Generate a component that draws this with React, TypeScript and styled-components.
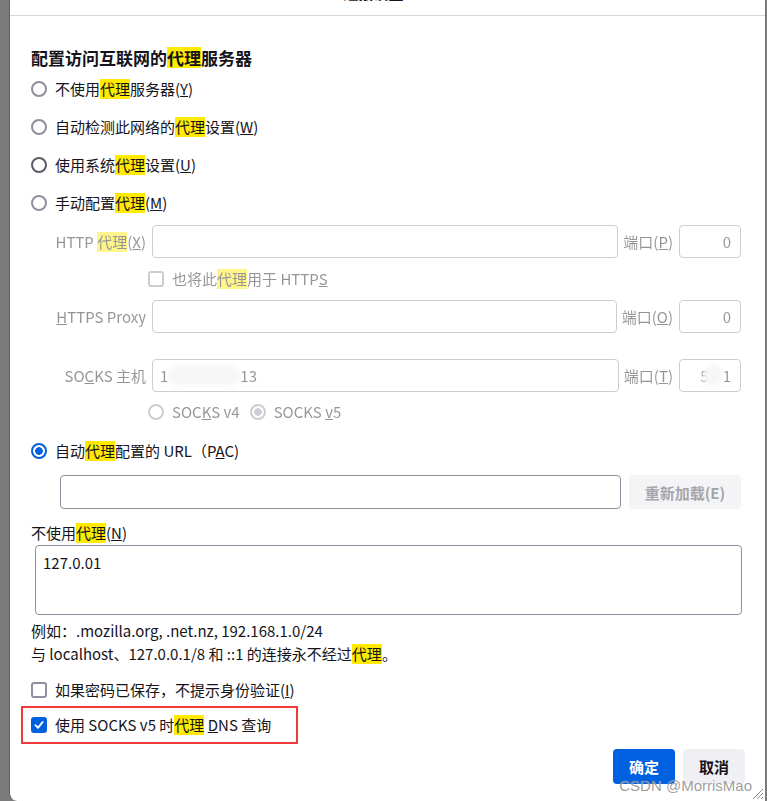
import React from "react";
import styled, { createGlobalStyle, css } from "styled-components";

const Global = createGlobalStyle`
  html, body { margin: 0; padding: 0; }
  body {
    background: #7b7b7b;
    font-family: "Noto Sans CJK SC", "Noto Sans", sans-serif;
    color: #15141a;
  }
`;

const Shell = styled.div`
  display: flex;
  width: 767px;
  height: 801px;
  padding-left: 9px;
  box-sizing: border-box;
  overflow: hidden;
`;

const Dialog = styled.div`
  position: relative;
  width: 757px;
  height: 801px;
  box-sizing: border-box;
  background: #fff;
  border-left: 1px solid #5f5f5f;
  border-right: 1px solid #7a7a7a;
  border-bottom-left-radius: 8px;
  display: flex;
  flex-direction: column;
`;

const Header = styled.div`
  height: 15px;
  border-bottom: 1px solid #d7d7db;
  display: flex;
  align-items: flex-start;
  justify-content: center;
  padding-right: 28px;
  overflow: hidden;
  position: relative;
`;

const Title = styled.div`
  font-size: 15px;
  font-weight: 700;
  line-height: 20px;
  margin-top: -17px;
`;

const Close = styled.div`
  position: absolute;
  right: 20px;
  top: -16px;
  font-size: 16px;
  line-height: 20px;
`;

const Content = styled.div`
  padding: 30px 24px 0 21px;
  display: flex;
  flex-direction: column;
  font-size: 15px;
`;

const Heading = styled.div`
  font-size: 17px;
  font-weight: 700;
  line-height: 24px;
`;

const Mark = styled.span<{ $big?: boolean }>`
  background: #ffea00;
  display: inline-block;
  line-height: ${(p) => (p.$big ? "21px" : "20px")};
`;

const Row = styled.div<{ $h?: number; $indent?: number; $gap?: number }>`
  display: flex;
  align-items: center;
  height: ${(p) => p.$h ?? 38}px;
  padding-left: ${(p) => p.$indent ?? 0}px;
  gap: ${(p) => p.$gap ?? 8}px;
  font-size: 15px;
  line-height: 20px;
  white-space: nowrap;
`;

const Radio = styled.span<{ $checked?: boolean; $strong?: boolean }>`
  flex: none;
  width: 16px;
  height: 16px;
  box-sizing: border-box;
  border-radius: 50%;
  border: 2px solid ${(p) => (p.$strong ? "#5b5b66" : "#8f8f9d")};
  background: #fff;
  ${(p) =>
    p.$checked &&
    css`
      border-color: #0061e0;
      background: radial-gradient(circle, #0061e0 0 3.5px, #fff 4px);
    `}
`;

const RadioGray = styled(Radio)`
  ${(p) =>
    p.$checked &&
    css`
      border-color: #8f8f9d;
      background: radial-gradient(circle, #8f8f9d 0 3.5px, #fff 4px);
    `}
`;

const Check = styled.span<{ $checked?: boolean }>`
  flex: none;
  width: 16px;
  height: 16px;
  box-sizing: border-box;
  border-radius: 3px;
  border: 2px solid ${(p) => (p.$checked ? "#0061e0" : "#8f8f9d")};
  background: ${(p) => (p.$checked ? "#0061e0" : "#fff")};
  display: flex;
  align-items: center;
  justify-content: center;
`;

const Disabled = styled.div`
  opacity: 0.45;
  display: flex;
  flex-direction: column;
  margin-left: 23px;
`;

const FieldRow = styled.div<{ $mt?: number }>`
  display: flex;
  align-items: center;
  gap: 6px;
  margin-top: ${(p) => p.$mt ?? 0}px;
  font-size: 15px;
  white-space: nowrap;
`;

const FieldLabel = styled.div`
  width: 92px;
  flex: none;
  text-align: right;
  line-height: 20px;
`;

const PortLabel = styled.div`
  flex: none;
  line-height: 20px;
  margin-left: -1px;
`;

const InputBox = styled.div<{ $h?: number }>`
  flex: 1;
  height: ${(p) => p.$h ?? 33}px;
  box-sizing: border-box;
  border: 1px solid #8f8f9d;
  border-radius: 4px;
  padding: 0 7px;
  display: flex;
  align-items: center;
  line-height: 20px;
  overflow: hidden;
`;

const PortBox = styled(InputBox)`
  flex: none;
  width: 62px;
  justify-content: flex-end;
  padding-right: 9px;
`;

const Blob = styled.span<{ $w: number; $ml?: number }>`
  display: inline-block;
  width: ${(p) => p.$w}px;
  height: 21px;
  margin-left: ${(p) => p.$ml ?? 0}px;
  border-radius: 11px;
  background: #ececec;
  filter: blur(2px);
`;

const PacRow = styled.div`
  display: flex;
  gap: 8px;
  margin-top: 5px;
  padding-left: 29px;
`;

const Button = styled.div<{ $variant: "primary" | "secondary" | "disabled"; $w: number; $h?: number }>`
  flex: none;
  width: ${(p) => p.$w}px;
  height: ${(p) => p.$h ?? 35}px;
  border-radius: 4px;
  display: flex;
  align-items: center;
  justify-content: center;
  font-size: 15px;
  font-weight: 700;
  ${(p) =>
    p.$variant === "primary"
      ? css`
          background: #0061e0;
          color: #fff;
        `
      : p.$variant === "secondary"
      ? css`
          background: #f0f0f4;
          color: #15141a;
        `
      : css`
          background: #f4f4f6;
          color: #a5a5ab;
        `}
`;

const Label = styled.div`
  margin-top: 12px;
  line-height: 24px;
  font-size: 15px;
`;

const TextArea = styled.div`
  margin: 0 -1px 0 4px;
  height: 70px;
  box-sizing: border-box;
  border: 1px solid #8f8f9d;
  border-radius: 4px;
  padding: 7px 7px;
  line-height: 20px;
  font-size: 15px;
`;

const Hint = styled.div`
  margin-top: 4px;
  font-size: 15px;
  line-height: 23px;
`;

const Highlighted = styled.div`
  margin: 1px 0 0 -10px;
  width: 277px;
  height: 38px;
  box-sizing: border-box;
  border: 2px solid #f03a3a;
  display: flex;
  align-items: center;
  padding-left: 8px;
  gap: 8px;
  font-size: 15px;
  line-height: 20px;
  white-space: nowrap;
`;

const Buttons = styled.div`
  display: flex;
  justify-content: flex-end;
  gap: 8px;
  margin: 5px -4px 0 0;
`;

const Watermark = styled.div`
  position: absolute;
  right: 13px;
  bottom: 6px;
  font-family: "Liberation Sans", Arial, sans-serif;
  font-size: 15px;
  line-height: 18px;
  color: rgba(140, 140, 140, 0.85);
  text-shadow: 0 0 1px rgba(255, 255, 255, 0.6);
`;

const Grip = styled.svg`
  position: absolute;
  right: 1px;
  bottom: 1px;
`;

const CheckMark = () => (
  <svg width="10" height="10" viewBox="0 0 10 10">
    <path d="M1.5 5.2 L4 7.8 L8.6 2" fill="none" stroke="#fff" strokeWidth="1.9" strokeLinecap="round" strokeLinejoin="round" />
  </svg>
);

const HL = ({ big }: { big?: boolean }) => <Mark $big={big}>代理</Mark>;

export default function App() {
  return (
    <>
      <Global />
      <Shell>
        <Dialog>
          <Header>
            <Title>连接设置</Title>
            <Close>✕</Close>
          </Header>
          <Content>
            <Heading>
              配置访问互联网的<HL big />服务器
            </Heading>
            <Row>
              <Radio />
              <span>
                不使用<HL />服务器(<u>Y</u>)
              </span>
            </Row>
            <Row>
              <Radio />
              <span>
                自动检测此网络的<HL />设置(<u>W</u>)
              </span>
            </Row>
            <Row>
              <Radio $strong />
              <span>
                使用系统<HL />设置(<u>U</u>)
              </span>
            </Row>
            <Row>
              <Radio />
              <span>
                手动配置<HL />(<u>M</u>)
              </span>
            </Row>

            <Disabled>
              <FieldRow $mt={3}>
                <FieldLabel>
                  HTTP <HL />(<u>X</u>)
                </FieldLabel>
                <InputBox />
                <PortLabel>
                  端口(<u>P</u>)
                </PortLabel>
                <PortBox>0</PortBox>
              </FieldRow>
              <Row $h={42} $indent={94}>
                <Check />
                <span>
                  也将此<HL />用于 HTTP<u>S</u>
                </span>
              </Row>
              <FieldRow>
                <FieldLabel>
                  <u>H</u>TTPS Proxy
                </FieldLabel>
                <InputBox />
                <PortLabel>
                  端口(<u>O</u>)
                </PortLabel>
                <PortBox>0</PortBox>
              </FieldRow>
              <FieldRow $mt={26}>
                <FieldLabel>
                  SO<u>C</u>KS 主机
                </FieldLabel>
                <InputBox>
                  1<Blob $w={72} $ml={0} />13
                </InputBox>
                <PortLabel>
                  端口(<u>T</u>)
                </PortLabel>
                <PortBox>
                  5<Blob $w={20} $ml={-6} />1
                </PortBox>
              </FieldRow>
              <Row $h={40} $indent={94}>
                <RadioGray />
                <span>
                  SOC<u>K</u>S v4
                </span>
                <RadioGray $checked style={{ marginLeft: 2 }} />
                <span>
                  SOCKS <u>v</u>5
                </span>
              </Row>
            </Disabled>

            <Row>
              <Radio $checked />
              <span>
                自动<HL />配置的 URL（P<u>A</u>C)
              </span>
            </Row>
            <PacRow>
              <InputBox $h={34} />
              <Button $variant="disabled" $w={112} $h={34}>
                重新加载(E)
              </Button>
            </PacRow>

            <Label>
              不使用<HL />(<u>N</u>)
            </Label>
            <TextArea>127.0.01</TextArea>
            <Hint>
              例如：.mozilla.org, .net.nz, 192.168.1.0/24
              <br />
              与 localhost、127.0.0.1/8 和 ::1 的连接永不经过<HL />。
            </Hint>

            <Row $h={30} style={{ marginTop: 10 }}>
              <Check />
              <span>
                如果密码已保存，不提示身份验证(<u>I</u>)
              </span>
            </Row>
            <Highlighted>
              <Check $checked>
                <CheckMark />
              </Check>
              <span>
                使用 SOCKS v5 时<HL /> <u>D</u>NS 查询
              </span>
            </Highlighted>
            <Buttons>
              <Button $variant="primary" $w={62}>
                确定
              </Button>
              <Button $variant="secondary" $w={62}>
                取消
              </Button>
            </Buttons>
          </Content>
          <Watermark>CSDN @MorrisMao</Watermark>
          <Grip width="14" height="14" viewBox="0 0 14 14">
            <path d="M13 3 L3 13 M13 7 L7 13 M13 11 L11 13" stroke="#8a8a8a" strokeWidth="1" />
          </Grip>
        </Dialog>
      </Shell>
    </>
  );
}
